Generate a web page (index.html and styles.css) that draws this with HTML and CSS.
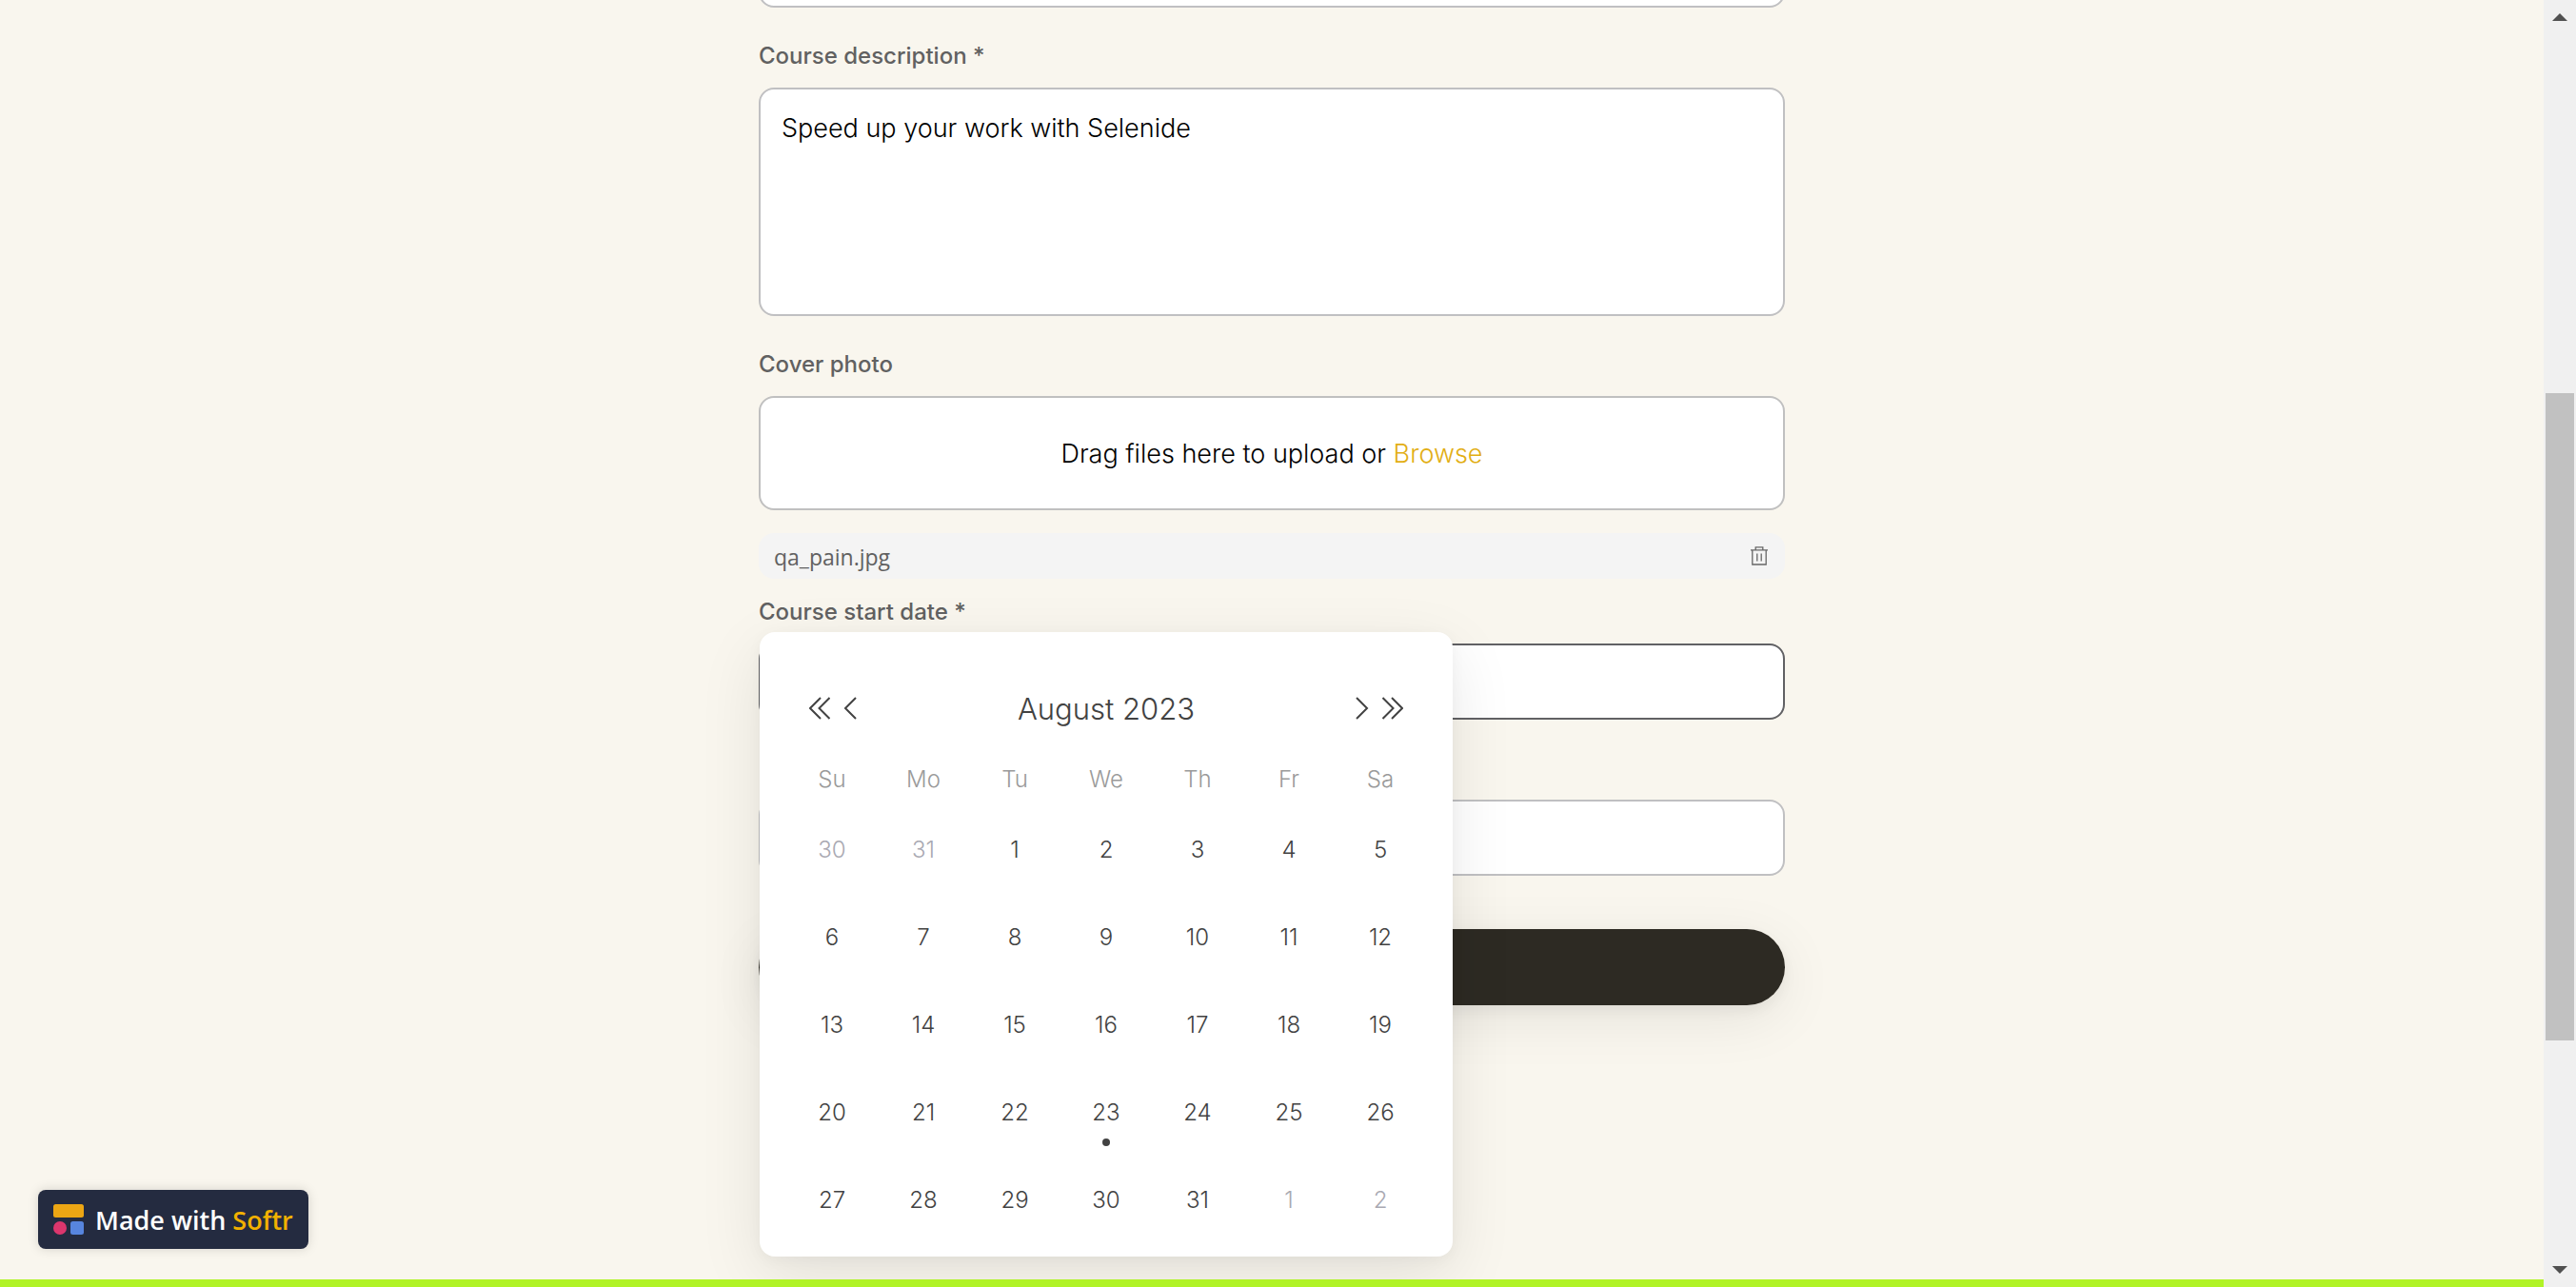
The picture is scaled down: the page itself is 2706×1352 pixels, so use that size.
FILE: index.html
```html
<!DOCTYPE html>
<html lang="en">
<head>
  <meta charset="utf-8">
  <title>Course form</title>
  <link rel="stylesheet" href="styles.css">
</head>
<body>
<div class="window">
  <div class="page">
    <main class="content">
      <form class="form">
        <input class="input input-first" type="text" aria-label="Course name">

        <label class="label" for="description">Course description *</label>
        <textarea class="input textarea" id="description">Speed up your work with Selenide</textarea>

        <span class="label">Cover photo</span>
        <div class="dropzone">
          <p class="dropzone-text">Drag files here to upload or <a class="browse" href="#">Browse</a></p>
        </div>
        <div class="file">
          <span class="file-name">qa_pain.jpg</span>
          <button class="file-remove" type="button" aria-label="Remove file">
            <svg width="18" height="20" viewBox="0 0 18 20" fill="none" stroke="#666" stroke-width="1.300">
              <path d="M0 3.800H18M5.200 3.500V.8H12.800V3.500M1.800 4V19H16.200V4M6.800 7.500V15.500M11.200 7.500V15.500"/>
            </svg>
          </button>
        </div>

        <label class="label label-start" for="start">Course start date *</label>
        <div class="date-field">
          <input class="input input-active" id="start" type="text">
          <section class="picker" aria-label="Choose a date">
            <header class="picker-header">
              <div class="picker-nav">
                <button class="arrow" type="button" aria-label="Previous year"><svg width="22" height="24" viewBox="0 0 22 24"><path d="M12 1L1 12L12 23M21.500 1L10.500 12L21.500 23"/></svg></button>
                <button class="arrow" type="button" aria-label="Previous month"><svg width="14" height="24" viewBox="0 0 14 24"><path d="M13 1L2 12L13 23"/></svg></button>
              </div>
              <h2 class="picker-title">August 2023</h2>
              <div class="picker-nav">
                <button class="arrow" type="button" aria-label="Next month"><svg width="14" height="24" viewBox="0 0 14 24"><path d="M1 1L12 12L1 23"/></svg></button>
                <button class="arrow" type="button" aria-label="Next year"><svg width="22" height="24" viewBox="0 0 22 24"><path d="M.5 1L11.500 12L.5 23M10 1L21 12L10 23"/></svg></button>
              </div>
            </header>
            <table class="days">
              <thead>
                <tr><th>Su</th><th>Mo</th><th>Tu</th><th>We</th><th>Th</th><th>Fr</th><th>Sa</th></tr>
              </thead>
              <tbody>
                <tr><td class="outside">30</td><td class="outside">31</td><td>1</td><td>2</td><td>3</td><td>4</td><td>5</td></tr>
                <tr><td>6</td><td>7</td><td>8</td><td>9</td><td>10</td><td>11</td><td>12</td></tr>
                <tr><td>13</td><td>14</td><td>15</td><td>16</td><td>17</td><td>18</td><td>19</td></tr>
                <tr><td>20</td><td>21</td><td>22</td><td class="today">23</td><td>24</td><td>25</td><td>26</td></tr>
                <tr><td>27</td><td>28</td><td>29</td><td>30</td><td>31</td><td class="outside">1</td><td class="outside">2</td></tr>
              </tbody>
            </table>
          </section>
        </div>

        <input class="input input-last" type="text" aria-label="Course end date">
        <button class="submit" type="submit" aria-label="Submit"></button>
      </form>
    </main>
    <footer class="strip"></footer>
    <a class="badge" href="#">
      <svg width="32" height="32" viewBox="0 0 32 32">
        <rect width="32" height="14" rx="2.500" fill="#eca614"/>
        <circle cx="7" cy="25" r="7" fill="#db366d"/>
        <rect x="18" y="18" width="14" height="14" rx="2.500" fill="#5785de"/>
      </svg>
      <span>Made with <span class="badge-brand">Softr</span></span>
    </a>
  </div>
  <div class="scrollbar">
    <svg width="16" height="8" viewBox="0 0 16 8"><path d="M0 8L8 0L16 8Z" fill="#505050"/></svg>
    <div class="track"><div class="thumb"></div></div>
    <svg width="16" height="8" viewBox="0 0 16 8"><path d="M0 0L8 8L16 0Z" fill="#505050"/></svg>
  </div>
</div>
</body>
</html>
```
FILE: styles.css
```css
* {
  box-sizing: border-box;
}

body {
  margin: 0;
  font-family: Inter, "Liberation Sans", sans-serif;
  color: #111;
}

.window {
  display: grid;
  grid-template-columns: 1fr 34px;
  height: 100vh;
  overflow: hidden;
}

.page {
  position: relative;
  display: flex;
  flex-direction: column;
  min-width: 0;
  background: #f9f6ee;
}

.content {
  flex: 1;
  padding: 0 24px;
}

.form {
  display: flex;
  flex-direction: column;
  max-width: 1078px;
  margin: -72px auto 0;
}

.label {
  margin: 32px 0 14px;
  font-size: 24px;
  font-weight: 500;
  line-height: 38px;
  color: #616161;
}

.label-start {
  margin-top: 16px;
}

.input {
  display: block;
  width: 100%;
  height: 80px;
  padding: 22px;
  border: 2px solid #c0c0c2;
  border-radius: 16px;
  background: #fff;
  font-family: inherit;
  font-size: 27px;
  font-weight: 300;
  line-height: 38px;
  color: #000;
  outline: none;
}

.textarea {
  height: 240px;
  resize: none;
}

.input-active {
  border-color: #616164;
}

.input-last {
  margin-top: 84px;
}

.dropzone {
  display: flex;
  align-items: center;
  justify-content: center;
  height: 120px;
  border: 2px solid #c0c0c0;
  border-radius: 16px;
  background: #fff;
}

.dropzone-text {
  margin: 0;
  padding-top: 2px;
  font-size: 27px;
  font-weight: 300;
  line-height: 38px;
  color: #000;
}

.browse {
  color: #e2ae14;
  text-decoration: none;
}

.file {
  display: flex;
  align-items: center;
  justify-content: space-between;
  height: 48px;
  margin-top: 24px;
  padding: 0 18px 0 16px;
  border-radius: 16px;
  background: #f4f4f4;
}

.file-name {
  font-family: "Open Sans", "Noto Sans", sans-serif;
  font-size: 23px;
  line-height: 32px;
  padding-top: 2px;
  color: #616161;
}

.file-remove,
.arrow {
  display: flex;
  padding: 0;
  border: 0;
  background: none;
}

.date-field {
  position: relative;
}

.picker {
  position: absolute;
  z-index: 1;
  top: -12px;
  left: 1px;
  width: 728px;
  padding: 56px 28px 14px;
  border-radius: 16px;
  background: #fff;
  box-shadow: 0 20px 68px rgba(0, 0, 0, .09), 0 4px 16px rgba(0, 0, 0, .04);
}

.picker-header {
  display: flex;
  align-items: center;
  justify-content: space-between;
  height: 48px;
  padding: 0 24px;
}

.picker-nav {
  display: flex;
  gap: 14px;
}

.picker-title {
  margin: 0;
  padding-top: 2px;
  font-size: 31px;
  font-weight: 300;
  line-height: 46px;
  color: #424242;
}

.arrow path {
  fill: none;
  stroke: #424242;
  stroke-width: 2;
}

.days {
  width: 100%;
  border-collapse: collapse;
  table-layout: fixed;
  font-size: 24px;
  font-weight: 300;
  line-height: 36px;
  text-align: center;
  color: #424242;
}

.days th {
  height: 78px;
  padding: 33px 0 0;
  font-weight: 300;
  vertical-align: top;
  color: #9a9a9a;
}

.days td {
  position: relative;
  height: 92px;
  padding: 2px 0 0;
}

.days .outside {
  color: #a9a9b2;
}

.today::after {
  content: "";
  position: absolute;
  top: 74px;
  left: calc(50% - 4px);
  width: 8px;
  height: 8px;
  border-radius: 50%;
  background: #424242;
}

.submit {
  height: 80px;
  margin-top: 56px;
  border: 0;
  border-radius: 40px;
  background: #2d2a23;
  box-shadow: 0 14px 60px rgba(0, 0, 0, .08), 0 6px 14px rgba(0, 0, 0, .05);
}

.strip {
  position: relative;
  z-index: 2;
  height: 8px;
  background: #b1f327;
}

.badge {
  position: absolute;
  bottom: 40px;
  left: 40px;
  display: flex;
  align-items: center;
  gap: 12px;
  height: 62px;
  padding: 0 16px;
  border-radius: 8px;
  background: #242b40;
  box-shadow: 0 0 12px rgba(0, 0, 0, .15);
  font-family: "Open Sans", sans-serif;
  font-size: 27px;
  font-weight: 600;
  color: #fff;
  text-decoration: none;
  white-space: nowrap;
}

.badge-brand {
  color: #f2b100;
}

.scrollbar {
  display: flex;
  flex-direction: column;
  align-items: center;
  justify-content: space-between;
  padding: 14px 2px;
  background: #f0f0f0;
}

.track {
  display: flex;
  flex-direction: column;
  flex: 1;
  width: 100%;
}

.thumb {
  height: 52%;
  margin-top: 391px;
  background: #c1c1c1;
}
```
